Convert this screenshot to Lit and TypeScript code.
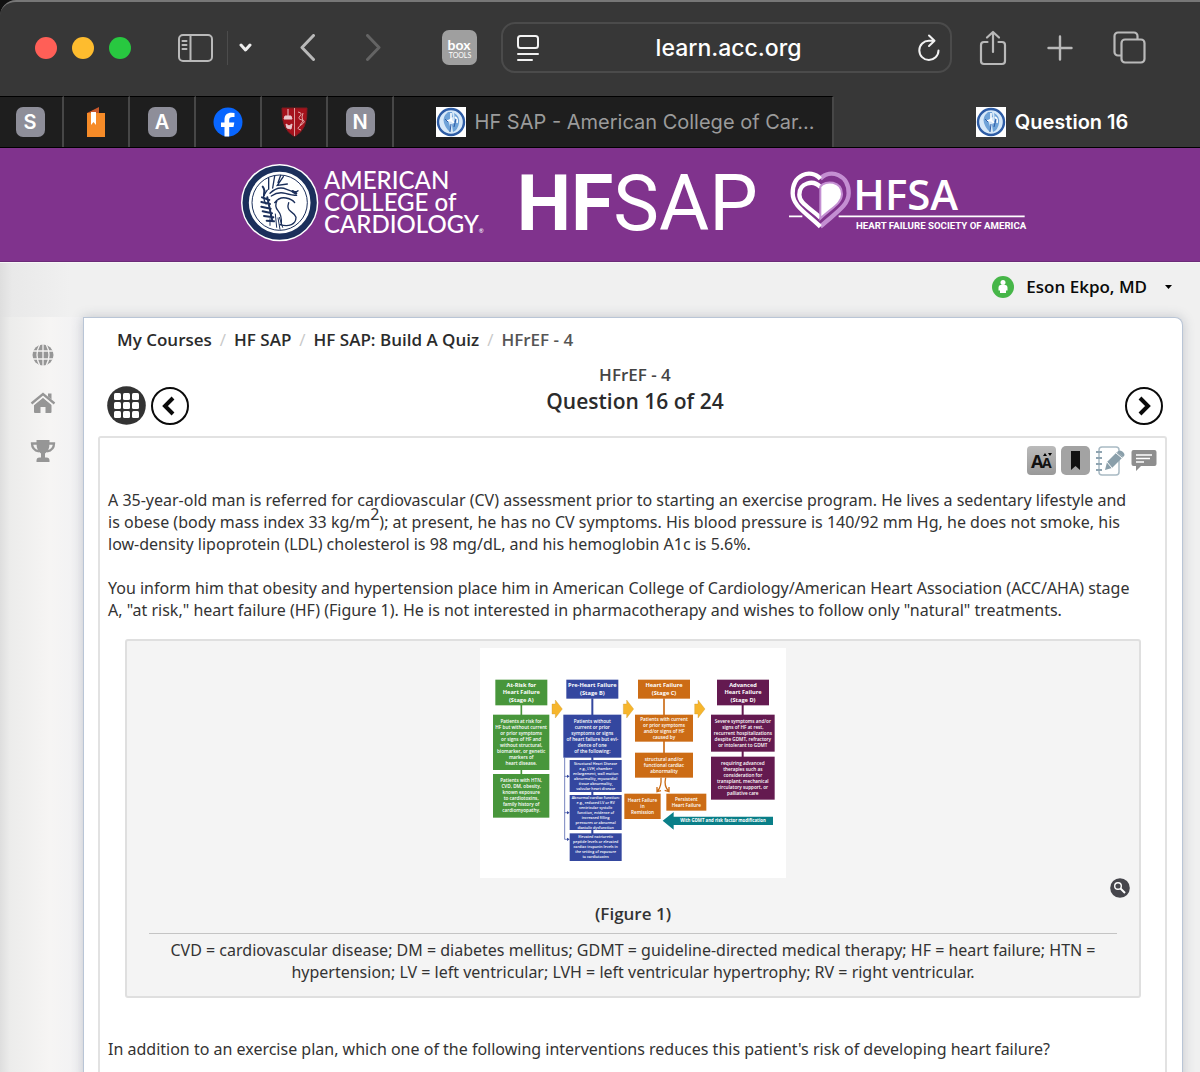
import { LitElement, html, svg, css } from "lit";
import { customElement, property } from "lit/decorators.js";

const sealArt = svg`
  <circle cx="149" cy="158" r="116" fill="#fff"/>
  <circle cx="149" cy="158" r="102" fill="none" stroke="#1b2f5b" stroke-width="19"/>
  <circle cx="149" cy="158" r="83" fill="none" stroke="#1b2f5b" stroke-width="3"/>
  <g fill="none" stroke="#1b2f5b" stroke-linecap="round">
    <path stroke-width="4" d="M116 84v34M112 120l-8 12M134 78l-6 36M152 76l-8 22M160 80l-18 26 30-4"/>
    <path stroke-width="3" d="M140 232l-4-40M150 238l-6-34M158 232l-10-30M120 226v-20"/>
    <path stroke-width="6" d="M98 110q8 10 4 26M96 142l22 8M94 156l26 6M94 170l28 6M98 184l28 6M102 198l28 4M110 212l22 2M112 142l14 66"/>
    <path stroke-width="4" d="M120 130q24-24 50-12t34 4M124 138q20-14 42-8t34 6M134 158q14-18 34-14t26 14M142 150q-10 18 2 32t10 42M176 158q-6 18 6 26t16 18q0 16-14 22t-34 0M104 122q-8 20 4 40"/>
    <path stroke-width="8" d="M188 124l10 6"/>
  </g>`;

const miniSeal = svg`
  <rect width="30" height="30" fill="#fff"/>
  <circle cx="15" cy="15" r="13" fill="#d6e8f8" stroke="#2d5ca6" stroke-width="2.4"/>
  <path d="M12 5q-6 5-4 11t6 9q1-5-1-9t4-6l-1-5zM18 6q6 3 5 10t-6 9l-1-7q4-5 2-12z" fill="#6fa3d8"/>
  <path d="M15 6v7M11 14q4-2 7 2M19 10q3 2 2 6" stroke="#fff" stroke-width="1.6" fill="none"/>
  <path d="M9 12l3 3M15 17l-1 8M20 12l-2 8" stroke="#2d5ca6" fill="none"/>`;

interface Box {
  x: number; y: number; w: number; h: number;
  color: string; size: number; step: number; bold?: boolean; lines: string[];
}

const GREEN = "#48963b", BLUE = "#34479f", ORANGE = "#cc6c15", PLUM = "#641a50", TEAL = "#0a7f88";

const BOXES: Box[] = [
  { x: 46, y: 104, w: 156, h: 77, color: GREEN, size: 17, step: 22, bold: true, lines: ["At-Risk for", "Heart Failure", "(Stage A)"] },
  { x: 39, y: 209, w: 169, h: 166, color: GREEN, size: 14, step: 18, lines: ["Patients at risk for", "HF but without current", "or prior symptoms", "or signs of HF and", "without structural,", "biomarker, or genetic", "markers of", "heart disease."] },
  { x: 39, y: 387, w: 169, h: 131, color: GREEN, size: 14, step: 18, lines: ["Patients with HTN,", "CVD, DM, obesity,", "known exposure", "to cardiotoxins,", "family history of", "cardiomyopathy."] },
  { x: 259, y: 104, w: 156, h: 57, color: BLUE, size: 17, step: 22, bold: true, lines: ["Pre-Heart Failure", "(Stage B)"] },
  { x: 250, y: 209, w: 174, h: 129, color: BLUE, size: 14, step: 18, lines: ["Patients without", "current or prior", "symptoms or signs", "of heart failure but evi-", "dence of one", "of the following:"] },
  { x: 269, y: 345, w: 156, h: 96, color: BLUE, size: 11, step: 15, lines: ["Structural Heart Disease", "e.g., LVH, chamber", "enlargement, wall motion", "abnormality, myocardial", "tissue abnormality,", "valvular heart disease"] },
  { x: 269, y: 450, w: 156, h: 105, color: BLUE, size: 11, step: 15, lines: ["Abnormal cardiac function:", "e.g., reduced LV or RV", "ventricular systolic", "function, evidence of", "increased filling", "pressures or abnormal", "diastolic dysfunction"] },
  { x: 269, y: 565, w: 156, h: 83, color: BLUE, size: 11, step: 15, lines: ["Elevated natriuretic", "peptide levels or elevated", "cardiac troponin levels in", "the setting of exposure", "to cardiotoxins"] },
  { x: 474, y: 104, w: 156, h: 57, color: ORANGE, size: 17, step: 22, bold: true, lines: ["Heart Failure", "(Stage C)"] },
  { x: 465, y: 209, w: 174, h: 81, color: ORANGE, size: 14, step: 18, lines: ["Patients with current", "or prior symptoms", "and/or signs of HF", "caused by"] },
  { x: 465, y: 323, w: 174, h: 75, color: ORANGE, size: 14, step: 18, lines: ["structural and/or", "functional cardiac", "abnormality"] },
  { x: 433, y: 446, w: 109, h: 76, color: ORANGE, size: 14, step: 18, lines: ["Heart Failure", "in", "Remission"] },
  { x: 559, y: 446, w: 120, h: 51, color: ORANGE, size: 14, step: 18, lines: ["Persistent", "Heart Failure"] },
  { x: 711, y: 104, w: 156, h: 77, color: PLUM, size: 17, step: 22, bold: true, lines: ["Advanced", "Heart Failure", "(Stage D)"] },
  { x: 693, y: 209, w: 191, h: 111, color: PLUM, size: 14, step: 18, lines: ["Severe symptoms and/or", "signs of HF at rest,", "recurrent hospitalizations", "despite GDMT, refractory", "or intolerant to GDMT"] },
  { x: 693, y: 335, w: 191, h: 129, color: PLUM, size: 14, step: 18, lines: ["requiring advanced", "therapies such as", "consideration for", "transplant, mechanical", "circulatory support, or", "palliative care"] },
];

@customElement("stage-chart")
class StageChart extends LitElement {
  static styles = css`
    :host { display: block; background: #fff; }
    svg { display: block; width: 100%; }
    text { font-family: "Open Sans", "Liberation Sans", sans-serif; font-weight: 600; fill: #fff; text-anchor: middle; }
    .bold { font-weight: 700; }
  `;

  private box(b: Box) {
    const first = b.y + b.h / 2 - ((b.lines.length - 1) * b.step) / 2 + b.size * 0.35;
    return svg`
      <rect x=${b.x} y=${b.y} width=${b.w} height=${b.h} fill=${b.color}/>
      ${b.lines.map((line, i) => svg`<text class=${b.bold ? "bold" : ""} font-size=${b.size} x=${b.x + b.w / 2} y=${first + i * b.step}>${line}</text>`)}`;
  }

  render() {
    return html`
      <svg viewBox="0 9 918 690" role="img" aria-label="Stages of heart failure">
        <path d="M124 180v210" stroke=${GREEN} stroke-width="5"/>
        <path d="M337 160v410" stroke=${BLUE} stroke-width="6"/>
        <path d="M552 160v165" stroke=${ORANGE} stroke-width="5"/>
        <path d="M788 180v160" stroke=${PLUM} stroke-width="6"/>
        <path d="M254 338v245h10M254 394h10M254 503h10" fill="none" stroke=${BLUE} stroke-width="2"/>
        <path d="M261 389l8 5-8 5zM261 498l8 5-8 5zM261 578l8 5-8 5z" fill=${BLUE}/>
        ${[216, 430, 644].map((x) => svg`<path transform="translate(${x} 165)" d="M0 12h10V0l21 27-21 27V42H0z" fill="#f6b52c" stroke="#c9962e" stroke-width="1"/>`)}
        <g fill="none" stroke=${ORANGE} stroke-width="4">
          <path d="M543 398q2 26-10 40M531 426v14l12-3"/>
          <path d="M557 398q-6 26 9 40M554 436l13 4v-14"/>
        </g>
        <path d="M548 527l33-26v14h298v25H581v14z" fill=${TEAL}/>
        <text class="bold" font-size="13" x="729" y="532">With GDMT and risk factor modification</text>
        ${BOXES.map((b) => this.box(b))}
      </svg>`;
  }
}

@customElement("browser-chrome")
class BrowserChrome extends LitElement {
  static styles = css`
    :host { display: block; background: #111; font-family: Inter, "Liberation Sans", sans-serif; }
    button { border: 0; padding: 0; margin: 0; background: none; font: inherit; color: inherit; display: flex; align-items: center; justify-content: center; flex: none; }
    svg { display: block; flex: none; }
    .bar { box-sizing: border-box; height: 96px; background: #373737; border-top: 2px solid #777; border-radius: 16px 0 0 0; padding: 0 54px 3px 35px; display: flex; align-items: center; color: #b9b9b9; }
    .lights { display: flex; gap: 15px; margin-right: 47px; }
    .light { width: 22px; height: 22px; border-radius: 50%; }
    .red { background: #ff5f57; }
    .yellow { background: #febc2e; }
    .green { background: #28c840; }
    .side { display: flex; align-items: center; margin-right: 48px; }
    .rule { width: 1px; height: 34px; background: #4c4c4c; margin: 0 11px 0 14px; }
    .nav { display: flex; gap: 51px; margin-right: 61px; }
    .off { color: #646464; }
    .ext { width: 35px; height: 35px; border-radius: 7px; background: #9f9f9f; color: #fff; margin-right: 24px; }
    .address { box-sizing: border-box; flex: 1; min-width: 0; height: 51px; border: 2px solid #4b4b4b; border-radius: 14px; padding: 0 10px 0 14px; display: flex; align-items: center; color: #f2f2f2; }
    .address input { flex: 1; min-width: 0; border: 0; background: none; color: #fff; font: 500 23px/28px Inter, "Liberation Sans", sans-serif; text-align: center; outline: none; padding: 0; }
    .actions { display: flex; align-items: center; gap: 40px; margin-left: 27px; }
    .tabs { display: flex; height: 52px; box-sizing: border-box; border-bottom: 1px solid #000; background: #1e1e1e; }
    .pin { box-sizing: border-box; width: 66px; border-top: 1px solid #000; border-right: 2px solid #474747; }
    .pin:first-child { width: 64px; padding-right: 2px; }
    .badge { width: 29px; height: 30px; border-radius: 7px; background: #8e8e99; color: #fff; font-weight: 600; font-size: 20px; line-height: 30px; text-align: center; }
    .tab { flex: 7 1 0; min-width: 0; gap: 9px; padding-left: 24px; border-top: 1px solid #000; border-right: 2px solid #474747; font-size: 20px; line-height: 28px; color: #9b9b9b; white-space: nowrap; }
    .tab.active { flex-grow: 5; padding-left: 70px; border: 0; background: #373737; color: #fff; font-weight: 600; }
  `;

  render() {
    return html`
      <div class="bar">
        <div class="lights">
          <button class="light red" aria-label="Close"></button>
          <button class="light yellow" aria-label="Minimize"></button>
          <button class="light green" aria-label="Zoom"></button>
        </div>
        <div class="side">
          <button aria-label="Sidebar"><svg width="35" height="28" fill="none" stroke="currentColor" stroke-width="2"><rect x="1" y="1" width="33" height="26" rx="4"/><path d="M12.500 1v26M4.500 7h4M4.500 11h4M4.500 15h4" stroke-linecap="round"/></svg></button>
          <span class="rule"></span>
          <button aria-label="Tab groups"><svg width="13" height="10" fill="none" stroke="#eee" stroke-width="3" stroke-linecap="round" stroke-linejoin="round"><path d="M2 2l4.500 5L11 2"/></svg></button>
        </div>
        <div class="nav">
          <button aria-label="Back"><svg width="15" height="27" fill="none" stroke="currentColor" stroke-width="3" stroke-linecap="round" stroke-linejoin="round"><path d="M13.500 1.500L2 13.500l11.500 12"/></svg></button>
          <button class="off" aria-label="Forward"><svg width="15" height="27" fill="none" stroke="currentColor" stroke-width="3" stroke-linecap="round" stroke-linejoin="round"><path d="M1.500 1.500L13 13.500l-11.500 12"/></svg></button>
        </div>
        <button class="ext" aria-label="Box Tools"><svg width="35" height="35" viewBox="0 0 35 35" fill="#fff" text-anchor="middle"><text x="17" y="20" font-family="Lato, sans-serif" font-size="14" font-weight="700">box</text><text x="18" y="28" font-family="Lato, sans-serif" font-size="7">TOOLS</text></svg></button>
        <div class="address">
          <svg width="22" height="28" fill="none" stroke="currentColor" stroke-width="2" stroke-linecap="round"><rect x="1" y="2" width="20" height="12" rx="2.500"/><path d="M1 20h20M1 26h14"/></svg>
          <input aria-label="Address" value="learn.acc.org">
          <button aria-label="Reload"><svg width="22" height="28" fill="none" stroke="currentColor" stroke-width="2" stroke-linecap="round" stroke-linejoin="round"><path d="M20.500 16.500a9.600 9.600 0 1 1-9.500-9.700h5M11 1.500l5.500 5.300-5.500 5.200"/></svg></button>
        </div>
        <div class="actions">
          <button aria-label="Share"><svg width="28" height="36" fill="none" stroke="currentColor" stroke-width="2.200" stroke-linecap="round" stroke-linejoin="round"><path d="M8.500 12H5a3 3 0 0 0-3 3v16a3 3 0 0 0 3 3h18a3 3 0 0 0 3-3V15a3 3 0 0 0-3-3h-3.500M14 22V2M8 7.500L14 2l6 5.500"/></svg></button>
          <button aria-label="New tab"><svg width="26" height="26" fill="none" stroke="currentColor" stroke-width="2.400" stroke-linecap="round"><path d="M13 1.500v23M1.500 13h23"/></svg></button>
          <button aria-label="Show tabs"><svg width="33" height="33" fill="none" stroke="currentColor" stroke-width="2.200"><path d="M8 24.500H5a3.500 3.500 0 0 1-3.500-3.500V5A3.500 3.500 0 0 1 5 1.500h16A3.500 3.500 0 0 1 24.500 5v3"/><rect x="8.500" y="8.500" width="23" height="23" rx="3.500"/></svg></button>
        </div>
      </div>
      <div class="tabs">
        <button class="pin"><span class="badge">S</span></button>
        <button class="pin" aria-label="Bookmarked book"><svg width="20" height="30"><path d="M1 6L13 0v6z" fill="#c8582b"/><path d="M1 6h18v24H1z" fill="#f68b28"/><path d="M5 5h5v13l-2.500-3L5 18z" fill="#fff"/></svg></button>
        <button class="pin"><span class="badge">A</span></button>
        <button class="pin" aria-label="Facebook"><svg width="30" height="30"><circle cx="15" cy="15" r="14.500" fill="#0866ff"/><path d="M11.500 29.500V20H8v-4.500h3.500V13c0-5 2.300-7.200 7-7.200l3 .3V10h-2c-2.400 0-3.300.9-3.300 3v2.500h5.100L20.500 20h-4.300v9.500z" fill="#fff"/></svg></button>
        <button class="pin" aria-label="University"><svg width="27" height="30"><path d="M1 1h25q1 22-12.500 28.500Q0 23 1 1z" fill="#a5121c" stroke="#7d1a1f"/><path d="M13.500 1v28" stroke="#d99a9a"/><path d="M7 2v7M4 9h6l1 3H3zM5 17l3 2 3-2-1 5-4-1z" fill="#e8c7cd" stroke="#e8c7cd"/><path d="M17 5q5 1 2 4t2 4-1 5 0 5M22 6q-2 4 0 8l-3 4" stroke="#e3a9a9" fill="none"/></svg></button>
        <button class="pin"><span class="badge">N</span></button>
        <button class="tab"><svg width="30" height="30">${miniSeal}</svg><span>HF SAP - American College of Car...</span></button>
        <button class="tab active"><svg width="30" height="30">${miniSeal}</svg><span>Question 16</span></button>
      </div>`;
  }
}

@customElement("site-banner")
class SiteBanner extends LitElement {
  static styles = css`
    :host { display: block; background: #80338d; border-bottom: 1px solid #6c2b78; }
    .logos { display: flex; justify-content: center; padding-left: 66px; height: 113px; }
    svg { display: block; height: 114px; flex: none; }
    text { fill: #fff; }
    .acc { width: 250px; margin-right: 24px; }
    .acc text { font-family: Lato, "Open Sans", sans-serif; font-size: 72px; font-weight: 500; }
    .acc .mark { font-size: 18px; }
    .sap { width: 266px; margin-right: 9px; }
    .sap text { font-family: Roboto, "Liberation Sans", sans-serif; font-size: 231px; }
    .sap .strong { font-weight: 700; }
    .hfsa { width: 238px; }
    .hfsa .name { font-family: "Open Sans", sans-serif; font-weight: 600; font-size: 126px; }
    .hfsa .tag { font-family: Roboto, "Liberation Sans", sans-serif; font-weight: 700; font-size: 29px; }
  `;

  render() {
    return html`
      <div class="logos">
        <svg class="acc" viewBox="30 -6 750 342">
          ${sealArt}
          <text x="282" y="117">AMERICAN</text>
          <text x="282" y="183">COLLEGE of</text>
          <text x="282" y="249">CARDIOLOGY</text>
          <text class="mark" x="746" y="248">®</text>
        </svg>
        <svg class="sap" viewBox="0 -6 798 342">
          <text x="8" y="240"><tspan class="strong">HF</tspan><tspan>SAP</tspan></text>
        </svg>
        <svg class="hfsa" viewBox="57 -6 714 342">
          <g fill="none" stroke-width="13">
            <path d="M151 86C182 55 236 74 236 130C236 166 200 186 151 230" stroke="#c48fd2"/>
            <path d="M151 86C120 55 68 74 68 130C68 166 104 186 151 230" stroke="#fff"/>
            <path d="M151 111C130 88 88 98 88 134C88 160 118 172 151 203" stroke="#fff"/>
          </g>
          <path d="M151 110C166 88 216 94 216 132C216 160 184 174 151 206z" fill="#fff" stroke="#c48fd2" stroke-width="6"/>
          <path d="M57 199h40M206 199h558" stroke="#fff" stroke-width="5"/>
          <text class="name" x="250" y="180">HFSA</text>
          <text class="tag" x="258" y="238">HEART FAILURE SOCIETY OF AMERICA</text>
        </svg>
      </div>`;
  }
}

@customElement("round-arrow")
class RoundArrow extends LitElement {
  @property() label = "";
  @property({ type: Boolean }) next = false;

  static styles = css`
    :host { display: block; }
    button { display: block; width: 38px; height: 38px; border: 2px solid #0a0a0a; border-radius: 50%; background: #fff; padding: 0; }
    svg { display: block; margin: auto; }
  `;

  render() {
    return html`<button aria-label=${this.label}>
      <svg width="20" height="20" fill="none" stroke="#0a0a0a" stroke-width="4"><path d=${this.next ? "M6 2l8 8-8 8" : "M13 2l-8 8 8 8"}/></svg>
    </button>`;
  }
}

@customElement("app-root")
class AppRoot extends LitElement {
  static styles = css`
    :host { display: flex; flex-direction: column; min-height: 100vh; background: #f0f0f0; font: 17px/22px "Open Sans", "Noto Sans", sans-serif; color: #333; }
    a { color: inherit; text-decoration: none; }
    button { border: 0; padding: 0; margin: 0; background: none; font: inherit; color: inherit; }
    svg { display: block; }
    .page { flex: 1; display: flex; flex-direction: column; background: linear-gradient(90deg, #dedede, #e9e9e9 12px, #f0f0f0 70px); }
    .account { height: 55px; box-sizing: border-box; padding: 0 28px 6px; display: flex; justify-content: flex-end; align-items: center; border-top: 1px solid #f7f7f7; }
    .user { display: flex; align-items: center; gap: 12px; font-weight: 600; color: #0a0a0a; }
    .caret { margin-left: 6px; }
    .columns { flex: 1; display: flex; }
    .rail { width: 83px; flex: none; box-sizing: border-box; padding: 24px 0 0 28px; display: flex; flex-direction: column; gap: 20px; background: linear-gradient(90deg, #dedede, #ececeb 10px, #f6f5f4 50px, #f1f1f3); color: #969696; }
    .rail a { width: 30px; height: 28px; display: flex; align-items: center; justify-content: center; }
    .card { flex: 1; min-width: 0; margin-right: 17px; box-sizing: border-box; background: #fff; border: 1px solid #b9c5d6; border-bottom: 0; border-radius: 0 8px 0 0; box-shadow: 0 0 12px rgba(60, 70, 90, 0.25); padding: 11px 15px 0 14px; display: flex; flex-direction: column; }
    .crumbs { display: flex; gap: 8px; padding-left: 19px; font-weight: 600; color: #2b2b2b; }
    .crumbs .sep { color: #c8c8c8; font-weight: 400; }
    .crumbs .here { color: #555; }
    .heading { display: flex; justify-content: space-between; align-items: flex-end; margin-top: 13px; padding: 0 4px 0 9px; }
    .left { display: flex; gap: 5px; width: 82px; align-items: center; }
    .right { width: 82px; display: flex; justify-content: flex-end; }
    .title { text-align: center; font-weight: 600; padding-bottom: 11px; }
    .title p { margin: 0; color: #444; }
    .title h1 { margin: 2px 0 0; font-size: 21px; line-height: 26px; font-weight: 600; color: #2b2b2b; }
    .question { flex: 1; margin-top: 11px; border: 2px solid #e2e2e2; border-bottom: 0; border-radius: 3px 3px 0 0; padding: 8px 9px 0 8px; }
    .tools { display: flex; justify-content: flex-end; align-items: center; gap: 5px; height: 29px; margin: 0 -5px 14px 0; }
    .tool { border-radius: 4px; }
    .text { margin: 0 0 22px; padding-right: 24px; font: 16px/22px "Noto Sans", "Open Sans", sans-serif; }
    sup { font-size: 16px; line-height: 0; vertical-align: 8px; }
    .figure { margin: -4px 15px 40px 17px; background: #f4f4f4; border: 2px solid #dfdfdf; border-radius: 3px; padding: 7px 22px 13px; text-align: center; }
    .chart { width: 306px; margin: 0 auto; }
    .zoom { display: block; margin: 0 -13px 0 auto; }
    .figure h2 { margin: 5px 0 8px; font-size: 17px; line-height: 22px; font-weight: 600; }
    .figure .text { margin: 0; padding: 5px 0 0; border-top: 1px solid #c4c4c4; }
  `;

  render() {
    return html`
      <browser-chrome></browser-chrome>
      <site-banner></site-banner>
      <div class="page">
        <div class="account">
          <button class="user">
            <svg width="22" height="22"><circle cx="11" cy="11" r="11" fill="#46b648"/><circle cx="11" cy="6.500" r="2.500" fill="#fff"/><path d="M8.500 9h5q2 0 2 2.500v3h-1.500V17H8v-2.500H6.500v-3Q6.500 9 8.500 9z" fill="#fff"/></svg>
            <span>Eson Ekpo, MD</span>
            <svg class="caret" width="7" height="4"><path d="M0 0h7L3.500 4z"/></svg>
          </button>
        </div>
        <div class="columns">
          <nav class="rail" aria-label="Site">
            <a href="#courses" aria-label="Courses"><svg width="22" height="22" viewBox="0 0 22 22"><circle cx="11" cy="11" r="10.500" fill="currentColor"/><path d="M11 0v22M0 7h22M0 15h22M8 0q-6 11 0 22M14 0q6 11 0 22" stroke="#f3f2f1" stroke-width="1.300" fill="none"/></svg></a>
            <a href="#home" aria-label="Home"><svg width="26" height="22" viewBox="0 0 26 22" fill="currentColor"><path d="M13 5.500l8.500 7.200V20a1 1 0 0 1-1 1H15.500v-6h-5v6H5a1 1 0 0 1-1-1v-7.300z"/><path d="M1.500 11.500L13 2l11.500 9.500" fill="none" stroke="currentColor" stroke-width="2.300"/><path d="M13 5L3 13.400M13 5l10 8.400" stroke="#f3f2f1" stroke-width="1.200"/><path d="M18 1.500h3.500v6L18 4.500z"/></svg></a>
            <a href="#awards" aria-label="Awards"><svg width="26" height="24" viewBox="0 0 26 24" fill="currentColor"><path d="M6.500 1h13v3q0 8-4.500 10.500v4h1.500q3 0 3 3V23h-13v-1.500q0-3 3-3H11v-4Q6.500 12 6.500 4z"/><path d="M7 4.500H2q0 6.500 7 8M19 4.500h5q0 6.500-7 8" fill="none" stroke="currentColor" stroke-width="2.300"/></svg></a>
          </nav>
          <main class="card">
            <nav class="crumbs" aria-label="Breadcrumb">
              <a href="#my-courses">My Courses</a><span class="sep">/</span>
              <a href="#hf-sap">HF SAP</a><span class="sep">/</span>
              <a href="#quiz">HF SAP: Build A Quiz</a><span class="sep">/</span>
              <span class="here">HFrEF - 4</span>
            </nav>
            <div class="heading">
              <div class="left">
                <button aria-label="All questions"><svg width="39" height="39"><circle cx="19.500" cy="19.500" r="19.300" fill="#333"/>${[7, 16, 25].map((y) => [7, 16, 25].map((x) => svg`<rect x=${x} y=${y} width="7" height="7" rx="1.500" fill="#fff"/>`))}</svg></button>
                <round-arrow label="Previous question"></round-arrow>
              </div>
              <div class="title"><p>HFrEF - 4</p><h1>Question 16 of 24</h1></div>
              <div class="right"><round-arrow next label="Next question"></round-arrow></div>
            </div>
            <section class="question">
              <div class="tools">
                <button class="tool" aria-label="Text size"><svg width="29" height="29"><defs><linearGradient id="g" x2="0" y2="1"><stop stop-color="#bbb"/><stop offset="1" stop-color="#999"/></linearGradient></defs><rect width="29" height="29" rx="4" fill="url(#g)"/><g font-family="Open Sans, sans-serif" font-weight="700" fill="#111"><text x="4" y="22" font-size="18">A</text><text x="15" y="22" font-size="14">A</text></g><path d="M16 10l2-3 2 3zM21 7h4l-2 3z"/></svg></button>
                <button class="tool" aria-label="Bookmark"><svg width="29" height="29"><rect width="29" height="29" rx="5" fill="#a3a3a3"/><path d="M10 5h9v19l-4.500-4-4.500 4z" fill="#111"/></svg></button>
                <button class="tool" aria-label="Notes"><svg width="30" height="30" fill="none"><rect x="4" y="1" width="20" height="28" rx="3" stroke="#a9bac4" stroke-width="1.500"/><path d="M1 6h6M1 12h6M1 18h6M1 24h6" stroke="#8fa4b1" stroke-width="1.800"/><path d="M10 24l2-8L22 6l6 5-11 11z" fill="#8a9faa"/><path d="M22 6q3-3 6 0t0 5" fill="#8a9faa"/><path d="M12 16l5 6M21 7l6 5" stroke="#fff"/></svg></button>
                <button class="tool" aria-label="Comments"><svg width="31" height="26" viewBox="2 0 31 26"><path d="M5.500 2h21a2 2 0 0 1 2 2v12a2 2 0 0 1-2 2H13l-5 5v-5H5.500a2 2 0 0 1-2-2V4a2 2 0 0 1 2-2z" fill="#8e8e8e"/><path d="M8 7h16M8 10.500h14M8 14h8" stroke="#fff" stroke-width="1.300"/></svg></button>
              </div>
              <p class="text">A 35-year-old man is referred for cardiovascular (CV) assessment prior to starting an exercise program. He lives a sedentary lifestyle and is obese (body mass index 33 kg/m<sup>2</sup>); at present, he has no CV symptoms. His blood pressure is 140/92 mm Hg, he does not smoke, his low-density lipoprotein (LDL) cholesterol is 98 mg/dL, and his hemoglobin A1c is 5.6%.</p>
              <p class="text">You inform him that obesity and hypertension place him in American College of Cardiology/American Heart Association (ACC/AHA) stage A, "at risk," heart failure (HF) (Figure 1). He is not interested in pharmacotherapy and wishes to follow only "natural" treatments.</p>
              <div class="figure">
                <stage-chart class="chart"></stage-chart>
                <button class="zoom" aria-label="Enlarge figure"><svg width="20" height="20"><circle cx="10" cy="10" r="9.800" fill="#46464c"/><circle cx="8" cy="8" r="3.300" fill="none" stroke="#fff" stroke-width="1.400"/><path d="M10.500 10.500l4.500 4.500" stroke="#fff" stroke-width="2"/></svg></button>
                <h2>(Figure 1)</h2>
                <p class="text">CVD = cardiovascular disease; DM = diabetes mellitus; GDMT = guideline-directed medical therapy; HF = heart failure; HTN = hypertension; LV = left ventricular; LVH = left ventricular hypertrophy; RV = right ventricular.</p>
              </div>
              <p class="text">In addition to an exercise plan, which one of the following interventions reduces this patient's risk of developing heart failure?</p>
            </section>
          </main>
        </div>
      </div>`;
  }
}
